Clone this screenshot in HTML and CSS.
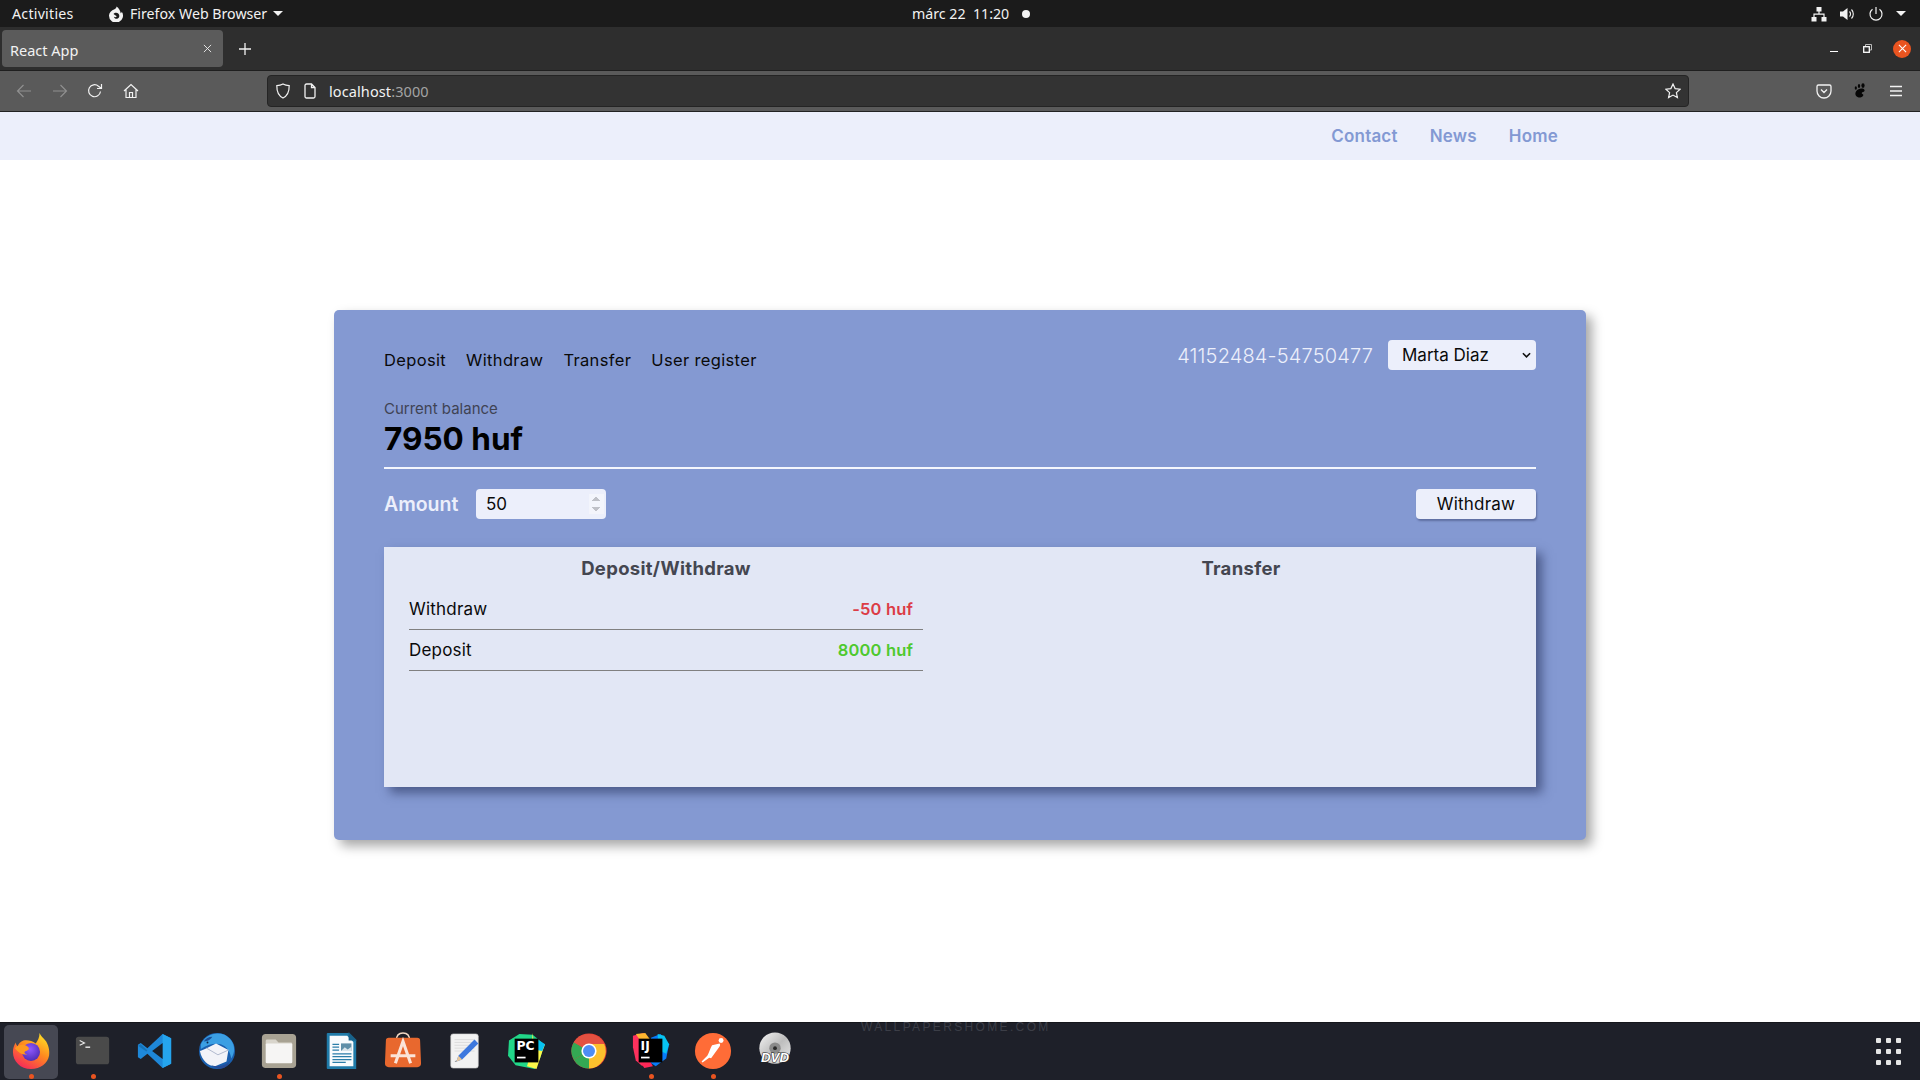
FILE: index.html
```html
<!DOCTYPE html>
<html lang="en">
<head>
<meta charset="utf-8">
<title>React App</title>
<link rel="stylesheet" href="styles.css">
</head>
<body>
<div class="screen">
  <header class="topbar">
    <span class="activities">Activities</span>
    <span class="appmenu">
      <svg class="ic16" viewBox="0 0 16 16"><path d="M8.500.5C8.500 2 7.500 2.800 6.500 3.300 3.500 4.500 1 6.500 1 9.500a7 7 0 1 0 12.800-3.800c-.2.800-.6 1.300-1.100 1.600C12.300 4.800 10.800 1.800 8.500.5z" fill="#f2f2f2"/><path d="M5.500 8c1-1.500 3.500-1.800 5-.3 1.400 1.500 1 4-.8 4.800-1.600.7-3.500-.2-3.800-1.800 1 .6 2 .6 2.500 0 .4-.5-.1-1.200-.8-1.300z" fill="#1b1b1b"/></svg>
      <span>Firefox Web Browser</span>
      <i class="caret"></i>
    </span>
    <span class="clock">márc 22&nbsp; 11:20<i class="clockdot"></i></span>
    <span class="tray">
      <svg class="ic16" viewBox="0 0 16 16"><path d="M5.500 1h5v4.500h-5zM0.500 11h5v4.500h-5zM10.500 11h5v4.500h-5zM7.400 5.500h1.200v2.100H13.600v3.400h-1.200V8.800H3.600V11H2.400V7.600h5z" fill="#f2f2f2"/></svg>
      <svg class="ic16" viewBox="0 0 16 16"><path d="M1 5.500h3L8.500 2v12L4 10.500H1z" fill="#f2f2f2"/><path d="M10.500 5.500a3.500 3.500 0 0 1 0 5M12.500 3.500a6.500 6.500 0 0 1 0 9" fill="none" stroke="#f2f2f2" stroke-width="1.100"/></svg>
      <svg class="ic16" viewBox="0 0 16 16"><path d="M8 1v7M4.500 3.200a6 6 0 1 0 7 0" fill="none" stroke="#f2f2f2" stroke-width="1.200"/></svg>
      <i class="caret"></i>
    </span>
  </header>

  <div class="tabbar">
    <div class="tab"><span>React App</span>
      <svg class="ic10" viewBox="0 0 10 10"><path d="M1 1l8 8M9 1l-8 8" stroke="#eee" stroke-width="1"/></svg>
    </div>
    <svg class="newtab" viewBox="0 0 12 12"><path d="M6 0v12M0 6h12" stroke="#f2f2f2" stroke-width="1.300"/></svg>
    <div class="winctl">
      <i class="win-min"></i>
      <svg class="win-res" viewBox="0 0 9 9"><path d="M2.500 2.500V.5h6v5.500h-2" fill="none" stroke="#bbb" stroke-width="1"/><rect x=".7" y="2.700" width="5.600" height="5.600" fill="none" stroke="#fff" stroke-width="1.300"/></svg>
      <span class="win-close"><svg viewBox="0 0 10 10"><path d="M1 1l8 8M9 1l-8 8" stroke="#fff" stroke-width="1.200"/></svg></span>
    </div>
  </div>

  <div class="toolbar">
    <div class="navbtns">
      <svg class="ic16" viewBox="0 0 16 16"><path d="M15 8H1.500M7.500 2l-6 6 6 6" fill="none" stroke="#8f8f8f" stroke-width="1.200"/></svg>
      <svg class="ic16" viewBox="0 0 16 16"><path d="M1 8h13.500M8.500 2l6 6-6 6" fill="none" stroke="#8f8f8f" stroke-width="1.200"/></svg>
      <svg class="ic16" viewBox="0 0 16 16"><path d="M13.500 8.500A6 6 0 1 1 11.500 3.200L14.500 5.500M14.500 1v4.500H10" fill="none" stroke="#f2f2f2" stroke-width="1.200"/></svg>
      <svg class="ic16" viewBox="0 0 16 16"><path d="M1 8l7-6.500L15 8M3 6.500V14.500h10V6.500M6.500 14.500V9.500h3v5" fill="none" stroke="#f2f2f2" stroke-width="1.200"/></svg>
    </div>
    <div class="urlbar">
      <svg class="ic16" viewBox="0 0 16 16"><path d="M8 1c2 1.100 4 1.500 6.200 1.600C14.300 9 12.500 13 8 15 3.500 13 1.700 9 1.800 2.600 4 2.500 6 2.100 8 1z" fill="none" stroke="#f2f2f2" stroke-width="1.200"/></svg>
      <svg class="ic16" viewBox="0 0 16 16"><path d="M3 2.500A1.500 1.500 0 0 1 4.500 1H9.500L13 4.500v9A1.500 1.500 0 0 1 11.500 15h-7A1.500 1.500 0 0 1 3 13.500zM9.500 1v3.500H13" fill="none" stroke="#f2f2f2" stroke-width="1.300"/></svg>
      <span class="url">localhost<span class="port">:3000</span></span>
      <svg class="ic16 star" viewBox="0 0 16 16"><path d="M8 1l2.100 4.600 5 .6-3.700 3.400 1 5L8 12.100 3.600 14.600l1-5L.9 6.200l5-.6z" fill="none" stroke="#f2f2f2" stroke-width="1.200"/></svg>
    </div>
    <div class="tools">
      <svg class="ic16" viewBox="0 0 16 16"><path d="M2.500 2h11A1.500 1.500 0 0 1 15 3.500V8A7 7 0 0 1 1 8V3.500A1.500 1.500 0 0 1 2.500 2zM5 6.500l3 3 3-3" fill="none" stroke="#f2f2f2" stroke-width="1.300"/></svg>
      <svg class="ic16" viewBox="0 0 16 16"><path d="M9.500 5.500c3 0 4 2 2.300 3.300-2.300.4-2.800 1.700-.6 2.700.6 2-2.700 3.700-5.200 2.700S2.500 10.500 4.300 8C5.500 6.500 7.300 5.500 9.500 5.500z" fill="#060606"/><ellipse cx="3.800" cy="5" rx="1.100" ry="1.800" fill="#060606"/><ellipse cx="7" cy="3" rx="1.200" ry="2" fill="#060606"/><ellipse cx="11" cy="2.600" rx="1.600" ry="2.300" fill="#060606"/></svg>
      <svg class="ic16" viewBox="0 0 16 16"><path d="M2 3.500h12M2 8h12M2 12.500h12" stroke="#f2f2f2" stroke-width="1.300"/></svg>
    </div>
  </div>

  <main class="page">
    <nav class="sitenav">
      <a>Contact</a><a>News</a><a>Home</a>
    </nav>
    <section class="card">
      <div class="cardhead">
        <div class="tabs"><a>Deposit</a><a>Withdraw</a><a>Transfer</a><a>User register</a></div>
        <div class="account">
          <span class="accno">41152484-54750477</span>
          <select class="userselect"><option>Marta Diaz</option></select>
        </div>
      </div>
      <p class="ballabel">Current balance</p>
      <p class="balance">7950 huf</p>
      <hr class="rule">
      <div class="formrow">
        <label class="amount">Amount</label>
        <input class="amountinput" type="number" value="50">
        <button class="action">Withdraw</button>
      </div>
      <div class="history">
        <div class="col">
          <h3>Deposit/Withdraw</h3>
          <div class="row"><span>Withdraw</span><b class="neg">-50 huf</b></div>
          <div class="row"><span>Deposit</span><b class="pos">8000 huf</b></div>
        </div>
        <div class="col">
          <h3>Transfer</h3>
        </div>
      </div>
    </section>
  </main>

  <footer class="dock">
    <span class="watermark">WALLPAPERSHOME.COM</span>
    <div class="dockitem active">
      <svg class="app" viewBox="0 0 40 40">
        <defs>
          <linearGradient id="ffa" x1="0.800" y1="0" x2="0.200" y2="1"><stop offset="0" stop-color="#ffe226"/><stop offset=".45" stop-color="#ff8a1f"/><stop offset="1" stop-color="#f5225e"/></linearGradient>
          <radialGradient id="ffb" cx=".45" cy=".35" r=".7"><stop offset="0" stop-color="#9059ff"/><stop offset="1" stop-color="#4a2ab0"/></radialGradient>
        </defs>
        <path d="M29 1c1 3 4 5 7 9 3.500 6 3.500 12 3 15-1.500 8-9 14-19 14C9 39 1 31 1 21c0-4 1-7 3-10 0 2 1 3 2 4 1-3 3-5 6-6 4-1 9 0 13 3 2-3 4-6 4-11z" fill="url(#ffa)"/>
        <circle cx="20" cy="21" r="9.500" fill="url(#ffb)"/>
        <path d="M3 17c3-3 8-5 13-2 3 2 2 4-1 5-3 .5-2 3 1 3.500-4 1-9-1-13-6.500z" fill="#ff9a1f"/>
      </svg>
      <i class="rundot"></i>
    </div>
    <div class="dockitem">
      <svg class="app" viewBox="0 0 40 40"><rect x="2" y="5" width="35" height="29" rx="3" fill="#4a4a4a"/><path d="M6 9l5 2.500-5 2.500" fill="none" stroke="#e8e8e8" stroke-width="1.200"/><path d="M12 16h5" stroke="#e8e8e8" stroke-width="1.500"/></svg>
      <i class="rundot"></i>
    </div>
    <div class="dockitem">
      <svg class="app" viewBox="0 0 40 40"><path d="M28 2l9 4.500v27L28 38 12 23l-7 5.500-3-1.800v-13.400l3-1.800 7 5.500z" fill="#1e88d9"/><path d="M28 2l9 4.500v27L28 38z" fill="#25a5ee"/><path d="M28 11.500L17 20l11 8.500z" fill="#1a2029"/><path d="M2 14.500l3-1.500 7 6.500-1 1z" fill="#1673b8"/></svg>
    </div>
    <div class="dockitem">
      <svg class="app" viewBox="0 0 40 40"><circle cx="20" cy="20" r="19" fill="#1a5fae"/><path d="M3 13C7 4 18-1 28 3c6 3 10 9 10 15 0 4-1 7-3 10-1-7-5-13-11-15-6-1.500-14 0-21 5z" fill="#3b9fe3"/><path d="M6 10c2-3 5-5 9-5-1 2-4 5-9 5z" fill="#1a4f96"/><circle cx="10" cy="11" r="1" fill="#0b2347"/><path d="M2 20c2-1 5-2 7-3l10-5 13 7-2 12-12 5C11 36 4 30 2 20z" fill="#f2f3f8"/><path d="M9 17l12 7 11-5" fill="none" stroke="#aeb6cc" stroke-width="1"/><path d="M14 35c6 2 13 1 18-3l2-3c-1 4-3 7-7 9-4 1-9 0-13-3z" fill="#274b96"/></svg>
    </div>
    <div class="dockitem">
      <svg class="app" viewBox="0 0 40 40"><rect x="2" y="2" width="36" height="36" rx="4" fill="#a8a293"/><path d="M6 12V9.500A1.500 1.500 0 0 1 7.500 8h9l3 3h13A1.500 1.500 0 0 1 34 12.500V14H6z" fill="#d9d5cc"/><rect x="6" y="12" width="28" height="21" rx="1.500" fill="#f6f5f4"/></svg>
      <i class="rundot"></i>
    </div>
    <div class="dockitem">
      <svg class="app" viewBox="0 0 40 40"><path d="M6 1h22l8 8v30H6a1 1 0 0 1-1-1V2a1 1 0 0 1 1-1z" fill="#1f7aa8"/><path d="M8 4h18.500L33 10.500V36H8z" fill="#f8fbfd"/><path d="M28 0l9 9h-9z" fill="#18628a"/><rect x="20" y="12" width="11" height="8" fill="#5f8fa8"/><path d="M20 20l4-4 3 2.500 4-3V20z" fill="#d8e4ea"/><path d="M11 13h7M11 16h7M11 19h7M11 23h20M11 26h20M11 29h20M11 32h14" stroke="#2b7ea9" stroke-width="1.300"/></svg>
    </div>
    <div class="dockitem">
      <svg class="app" viewBox="0 0 40 40"><path d="M13 9c0-6 3-8 7-8s7 2 7 8" fill="none" stroke="#f1d8c4" stroke-width="1.500"/><path d="M5 6h30a3 3 0 0 1 3 3l1 24a4 4 0 0 1-4 4H5a4 4 0 0 1-4-4l1-24a3 3 0 0 1 3-3z" fill="#e8682e"/><path d="M12 33l8-23 8 23M14 25h12M7 25h26" fill="none" stroke="#fbe4d8" stroke-width="3.200"/></svg>
    </div>
    <div class="dockitem">
      <svg class="app" viewBox="0 0 40 40"><rect x="5" y="2" width="29" height="36" rx="2.500" fill="#f2f2f2" stroke="#c8c8c8" stroke-width=".6"/><path d="M9 8h21M9 11h21M9 14h21M9 17h21M9 20h21" stroke="#d6d6d6" stroke-width=".8"/><path d="M30 8l4 4-17 17-6 2 2-6z" fill="#3d78de"/><path d="M13 25l4 4-6 2z" fill="#e8c79a"/><path d="M9 31l2-1 0 1z" fill="#333"/></svg>
    </div>
    <div class="dockitem">
      <svg class="app" viewBox="0 0 40 40"><path d="M1 9L12 2l14 1 12 10-4 14-6 12L8 35 0 25z" fill="#21d789"/><path d="M26 1l1 10 12 2-3 8-6 18-10-3 4-14z" fill="#fcf84a"/><path d="M30 7l9 6-3 7-6-1z" fill="#07c3f2"/><rect x="7" y="7" width="25" height="25" fill="#000"/><text class="logotext" x="9" y="19">PC</text><rect x="9.500" y="26" width="9" height="1.800" fill="#fff"/></svg>
    </div>
    <div class="dockitem">
      <svg class="app" viewBox="0 0 40 40"><circle cx="20" cy="20" r="18.500" fill="#ea4335"/><path d="M20 20L4 29.250A18.500 18.500 0 0 1 4 10.750z" fill="#34a853"/><path d="M4 29.250A18.500 18.500 0 0 0 20 38.500L20 20z" fill="#34a853"/><path d="M20 12.500H36A18.500 18.500 0 0 1 20 38.500L20 20z" fill="#fbc02d"/><path d="M20 20 4 10.750 A18.500 18.500 0 0 1 36 12.500 H20z" fill="#e35141"/><circle cx="20" cy="20" r="8" fill="#fff"/><circle cx="20" cy="20" r="6.300" fill="#4e8df5"/></svg>
    </div>
    <div class="dockitem">
      <svg class="app" viewBox="0 0 40 40"><path d="M1 4l11-3 6 7-7 28-7-6-3-14z" fill="#fe315d"/><path d="M4 2l10-1 5 7-7 6z" fill="#fdb62f"/><path d="M20 6l10-4 9 11-3 15-11 8-6-4z" fill="#087cfa"/><path d="M27 2l7 2 5 9-3 10-8-4z" fill="#07c3f2"/><path d="M8 31l9-4 5 9-9 2z" fill="#fe2857"/><rect x="7" y="7" width="25" height="25" fill="#000"/><text class="logotext" x="9" y="19">IJ</text><rect x="9.500" y="26" width="9" height="1.800" fill="#fff"/></svg>
      <i class="rundot"></i>
    </div>
    <div class="dockitem">
      <svg class="app" viewBox="0 0 40 40"><circle cx="20" cy="20" r="19" fill="#ff6c37"/><circle cx="28.500" cy="9" r="2.600" fill="#fff"/><path d="M27 12l-8 2c-2 3-3 8-5 11l-6 6 1 1 7-5 2 .5 8-11c1.500-2 2-3 1-4.500z" fill="#fff"/></svg>
      <i class="rundot"></i>
    </div>
    <div class="dockitem">
      <svg class="app" viewBox="0 0 40 40"><defs><linearGradient id="cd" x1="0" y1="0" x2="1" y2="1"><stop offset="0" stop-color="#f5f5f5"/><stop offset=".5" stop-color="#bdbdbd"/><stop offset="1" stop-color="#eaeaea"/></linearGradient></defs><circle cx="20" cy="17" r="16.500" fill="url(#cd)"/><circle cx="20" cy="17" r="6" fill="#8a8a8a"/><circle cx="20" cy="17" r="2" fill="#2a2a2a"/><text class="dvdtext" x="20" y="32">DVD</text></svg>
    </div>
    <div class="appgrid"><i></i><i></i><i></i><i></i><i></i><i></i><i></i><i></i><i></i></div>
  </footer>
</div>
</body>
</html>
```

FILE: styles.css
```css
* { box-sizing: border-box; }
html, body { margin: 0; padding: 0; height: 100%; overflow: hidden; background: #fff; }
.screen { width: 1920px; height: 1080px; display: flex; flex-direction: column; font-family: "Noto Sans", "Open Sans", sans-serif; }

/* GNOME top bar */
.topbar { height: 27px; background: #1b1b1b; color: #f2f2f2; font-size: 14.200px; display: flex; align-items: center; position: relative; padding-left: 12px; }
.activities { width: 96px; letter-spacing: .25px; }
.appmenu { display: flex; align-items: center; gap: 6px; }
.ic16 { width: 16px; height: 16px; display: block; flex: none; }
.caret { display: block; width: 0; height: 0; border-left: 5px solid transparent; border-right: 5px solid transparent; border-top: 5px solid #f2f2f2; }
.clock { position: absolute; left: 912px; display: flex; align-items: center; white-space: nowrap; }
.clockdot { width: 8px; height: 8px; border-radius: 50%; background: #f2f2f2; margin-left: 13px; }
.tray { margin-left: auto; display: flex; align-items: center; gap: 12.500px; padding-right: 14px; }

/* Firefox tabs */
.tabbar { height: 44px; background: #2e2e2e; display: flex; align-items: center; padding: 0 0 0 2px; border-bottom: 1px solid #1f1f1f; }
.tab { width: 221px; height: 37px; background: #5b5b5b; border-radius: 4px; color: #f2f2f2; font-size: 14.500px; display: flex; align-items: center; justify-content: space-between; padding: 2px 11px 0 8px; }
.ic10 { width: 9px; height: 9px; display: block; margin-top: -2px; }
.newtab { width: 12px; height: 12px; margin-left: 16px; }
.winctl { margin-left: auto; display: flex; align-items: center; padding-right: 9px; }
.win-min { display: block; width: 8px; height: 1px; background: #fff; margin-top: 6px; margin-right: 25px; }
.win-res { width: 9px; height: 9px; margin-right: 21px; }
.win-close { width: 18px; height: 18px; border-radius: 50%; background: #e95420; display: flex; align-items: center; justify-content: center; }
.win-close svg { width: 9px; height: 9px; }

/* Firefox toolbar */
.toolbar { height: 41px; background: #5a5a5a; display: flex; align-items: center; border-bottom: 1px solid #222; }
.navbtns { width: 267px; display: flex; gap: 19.700px; padding-left: 16px; }
.urlbar { width: 1422px; height: 32px; background: #333; border: 1px solid #242424; border-radius: 4px; display: flex; align-items: center; gap: 11px; padding: 0 7px 0 7px; color: #f2f2f2; font-size: 14.500px; }
.url { flex: 1; letter-spacing: .1px; }
.port { color: #a3a3a3; }
.tools { display: flex; gap: 20px; padding-left: 127px; }

/* Web page */
.page { flex: 1; background: #fff; font-family: Inter, "Noto Sans", sans-serif; }
.sitenav { height: 48px; background: #eceffb; display: flex; justify-content: flex-end; align-items: center; gap: 32px; padding-right: 362px; color: #8399d3; font-size: 17px; font-weight: 600; letter-spacing: .2px; }
.card { width: 1252px; height: 530px; margin: 150px auto 0; padding: 30px 50px; background: #8499d2; border-radius: 5px; box-shadow: 6px 6px 12px rgba(0,0,0,.35); }
.cardhead { display: flex; justify-content: space-between; align-items: flex-end; }
.tabs { display: flex; gap: 20px; font-size: 16.500px; line-height: 20px; color: #0a0a0a; letter-spacing: .35px; }
.account { display: flex; align-items: center; gap: 15px; }
.accno { font-size: 20px; font-weight: 300; color: #eceffb; letter-spacing: .15px; padding-top: 2px; }
.userselect { appearance: none; width: 148px; height: 30px; border: 0; border-radius: 4px; background: #eceffb url("data:image/svg+xml,%3Csvg xmlns='http://www.w3.org/2000/svg' viewBox='0 0 10 6'%3E%3Cpath d='M1 1l4 4 4-4' fill='none' stroke='%23111' stroke-width='1.800'/%3E%3C/svg%3E") no-repeat right 5px center / 9px 6px; color: #0a0a0a; font: 17px Inter, sans-serif; padding-left: 14px; }
.ballabel { margin: 30px 0 0; font-size: 15px; line-height: 18px; color: #3f4354; }
.balance { margin: 1px 0 0; font-size: 31.500px; line-height: 40px; font-weight: 700; color: #000; }
.rule { margin: 8px 0 0; height: 2px; border: 0; background: #f4f6fd; }
.formrow { margin-top: 20px; display: flex; align-items: center; }
.amount { width: 92px; font-size: 19.500px; font-weight: 600; color: #eceffb; }
.amountinput { width: 130px; height: 30px; border: 0; border-radius: 4px; background: #eceffb; color: #0a0a0a; font: 17px Inter, sans-serif; padding: 0 2px 0 10px; }
.amountinput::-webkit-inner-spin-button { opacity: .45; }
.action { margin-left: auto; width: 120px; height: 30px; border: 0; border-radius: 4px; background: #eceffb; color: #0a0a0a; font: 17px Inter, sans-serif; letter-spacing: .2px; box-shadow: 1px 2px 2px rgba(40,50,90,.4); }
.history { margin-top: 28px; height: 240px; background: #e2e7f5; padding: 11px 38px 0 25px; display: flex; gap: 61px; box-shadow: 6px 6px 10px rgba(30,40,80,.55); }
.col { width: 514px; }
.col h3 { margin: 0 0 11px; font-size: 18.500px; line-height: 20px; font-weight: 700; letter-spacing: .3px; text-align: center; color: #444650; }
.row { height: 41px; display: flex; justify-content: space-between; align-items: center; padding-right: 10px; border-bottom: 1px solid #808080; font-size: 17px; letter-spacing: .2px; color: #0a0a0a; }
.row b { font-size: 16.500px; font-weight: 600; letter-spacing: .15px; }
.neg { color: #dc3c46; }
.pos { color: #4fc92f; }

/* Dock */
.dock { height: 58px; background: #1e2029; display: flex; align-items: center; gap: 8px; padding-left: 4px; position: relative; border-top: 1px solid #15161b; }
.watermark { position: absolute; left: 861px; top: 0; font: 300 12px "Liberation Sans", sans-serif; letter-spacing: 2.350px; color: #3c3e47; line-height: 9px; white-space: nowrap; }
.dockitem { width: 54px; height: 54px; border-radius: 5px; display: flex; align-items: center; justify-content: center; position: relative; padding-bottom: 2px; }
.dockitem.active { background: #464853; }
.app { width: 38px; height: 38px; display: block; }
.rundot { position: absolute; left: 25px; bottom: 0; width: 5px; height: 5px; border-radius: 50%; background: #e95420; }
.appgrid { margin-left: auto; margin-right: 19px; display: grid; grid-template-columns: repeat(3, 5px); gap: 6px 5px; }
.appgrid i { display: block; width: 5px; height: 5px; background: #e6e6e6; border-radius: 1px; }
.logotext { font: 700 13px "DejaVu Sans", sans-serif; fill: #fff; }
.dvdtext { font: italic 700 14px "Liberation Sans", sans-serif; fill: #fff; stroke: #222; stroke-width: 1.200px; paint-order: stroke; text-anchor: middle; }
```
